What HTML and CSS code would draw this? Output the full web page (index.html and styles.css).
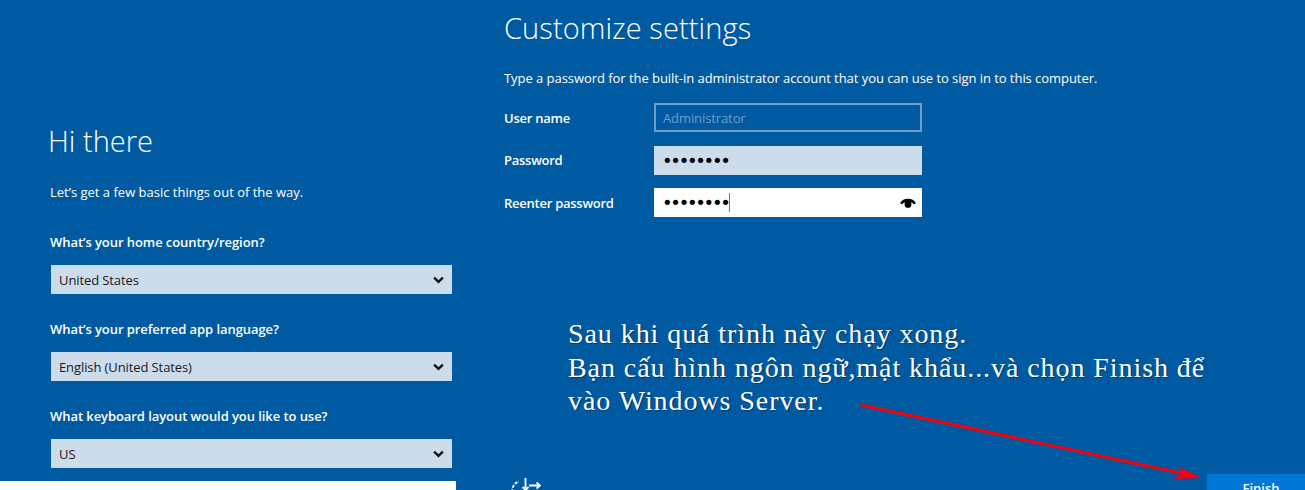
FILE: index.html
```html
<!DOCTYPE html>
<html>
<head>
<meta charset="utf-8">
<title>Customize settings</title>
<link rel="stylesheet" href="styles.css">
</head>

<body>

<div class="screen">

<div class="region-pane">
<div class="region-form">
<h1 class="hello">Hi there</h1>
<p class="hello-sub">Let’s get a few basic things out of the way.</p>

<p class="ask">What’s your home country/region?</p>
<div class="pick"><span>United States</span>
<svg class="chev" viewBox="0 0 12 8"><path d="M1.2 1.4 L6 6 L10.8 1.4" /></svg></div>

<p class="ask">What’s your preferred app language?</p>
<div class="pick"><span>English (United States)</span>
<svg class="chev" viewBox="0 0 12 8"><path d="M1.2 1.4 L6 6 L10.8 1.4" /></svg></div>

<p class="ask">What keyboard layout would you like to use?</p>
<div class="pick"><span>US</span>
<svg class="chev" viewBox="0 0 12 8"><path d="M1.2 1.4 L6 6 L10.8 1.4" /></svg></div>
</div>
<div class="white-strip"></div>
</div>

<div class="settings-pane">
<h1 class="title">Customize settings</h1>
<p class="lead">Type a password for the built-in administrator account that you can use to sign in to this computer.</p>

<div class="fields">
<label class="field-name">User name</label>
<div class="box box-disabled">Administrator</div>
<label class="field-name">Password</label>
<div class="box box-filled"><span class="dots">••••••••</span></div>
<label class="field-name">Reenter password</label>
<div class="box box-focus"><span class="dots">••••••••</span><span class="caret"></span>
<svg class="eye" viewBox="0 0 16 10"><path d="M0 5.2 C3 -0.6 13 -0.6 16 5.2 L13.8 6.2 C11.5 2.8 4.5 2.8 2.2 6.2 Z" /><circle cx="8" cy="6.4" r="3.4" /></svg></div>
</div>

<div class="bottom-bar">
<svg class="access" viewBox="0 0 30 12"><path d="M1.5 14 A9 9 0 0 1 8 3.5" stroke-dasharray="3 1.4" /><path d="M14.5 0 V14 M11.5 9 L14.5 12 L17.5 9 M18 7.5 H29 M25.5 4.5 L29 7.5 L25.5 10.5" /></svg>
<div class="finish">Finish</div>
</div>
</div>

</div>

<p class="note">Sau khi quá trình này chạy xong.<br>Bạn cấu hình ngôn ngữ,mật khẩu...và chọn Finish để<br>vào Windows Server.</p>

<svg class="arrow" viewBox="0 0 1305 490" width="1305" height="490">
<line x1="861" y1="405" x2="1190" y2="475" />
<path d="M1177 466 L1202 478 L1173 479 L1183 473 Z" />
</svg>

</body>
</html>
```

FILE: styles.css
```css
* {
  margin: 0;
  padding: 0;
  box-sizing: border-box;
}

html, body {
  height: 100%;
  overflow: hidden;
}

body {
  background-color: #005aa2;
  color: #fff;
  font-family: "Open Sans", "Noto Sans", sans-serif;
  font-size: 13px;
}

.screen {
  display: flex;
  height: 490px;
}

/* left pane */
.region-pane {
  width: 504px;
  flex: none;
  display: flex;
  flex-direction: column;
}
.region-form {
  flex: 1;
  padding: 122px 0 0 51px;
  width: 452px;
}
.white-strip {
  width: 456px;
  height: 9px;
  background-color: #fff;
}
.hello {
  font-size: 29px;
  font-weight: 300;
  line-height: 38px;
  margin-left: -3px;
}
.hello-sub {
  margin-top: 23px;
  margin-left: -1px;
  line-height: 18px;
}
.ask {
  font-weight: 600;
  line-height: 18px;
  margin-top: 26px;
  margin-left: -1px;
  letter-spacing: -0.07px;
}
.hello-sub + .ask {
  margin-top: 32px;
}
.pick {
  display: flex;
  align-items: center;
  justify-content: space-between;
  height: 29px;
  margin-top: 14px;
  padding: 0 8px;
  background-color: #ccdcea;
  color: #1a1a1a;
  letter-spacing: -0.1px;
}
.chev {
  width: 11px;
  height: 8px;
  fill: none;
  stroke: #111;
  stroke-width: 2.6;
}

/* right pane */
.settings-pane {
  flex: 1;
  display: flex;
  flex-direction: column;
  padding-top: 9px;
}
.title {
  font-size: 29px;
  font-weight: 300;
  line-height: 38px;
  letter-spacing: 0.1px;
}
.lead {
  margin-top: 22px;
  line-height: 18px;
  letter-spacing: -0.05px;
}
.fields {
  display: grid;
  grid-template-columns: 150px 268px;
  row-gap: 13.5px;
  align-items: center;
  margin-top: 16px;
}
.field-name {
  font-weight: 600;
  letter-spacing: -0.25px;
}
.box {
  display: flex;
  align-items: center;
  height: 29px;
  padding: 0 9px;
  color: #000;
}
.box-disabled {
  border: 2px solid #6d9dc7;
  padding: 0 7px;
  color: #6d9dc7;
  letter-spacing: -0.1px;
}
.box-filled {
  background-color: #ccdcea;
}
.box-focus {
  background-color: #fff;
}
.dots {
  font-family: "DejaVu Sans", sans-serif;
  font-size: 18px;
  letter-spacing: -2.3px;
  margin-left: -1px;
}
.caret {
  width: 1px;
  height: 19px;
  background-color: #777;
}
.eye {
  width: 16px;
  height: 10px;
  margin-left: auto;
  margin-right: -3px;
  fill: #000;
}

.bottom-bar {
  margin-top: auto;
  display: flex;
  align-items: flex-end;
  justify-content: space-between;
  height: 16px;
}
.access {
  width: 30px;
  height: 12px;
  margin-left: 7px;
  fill: none;
  stroke: #fff;
  stroke-width: 1.8;
}
.finish {
  width: 98px;
  height: 16px;
  padding: 6px 0 0 10px;
  background-color: #0078d7;
  font-weight: 600;
  font-size: 13px;
  line-height: 16px;
  text-align: center;
  overflow: hidden;
}

/* annotation pasted on top of the screenshot */
.note {
  position: absolute;
  left: 568px;
  top: 317px;
  font-family: "Liberation Serif", serif;
  font-size: 28px;
  line-height: 33.5px;
  letter-spacing: 0.93px;
  color: #fff;
  white-space: nowrap;
  text-shadow: 1px 1px 1px rgba(0, 0, 0, 0.35);
}
.arrow {
  position: absolute;
  left: 0;
  top: 0;
  pointer-events: none;
}
.arrow line {
  stroke: #f5000f;
  stroke-width: 3;
}
.arrow path {
  fill: #f5000f;
}
```
